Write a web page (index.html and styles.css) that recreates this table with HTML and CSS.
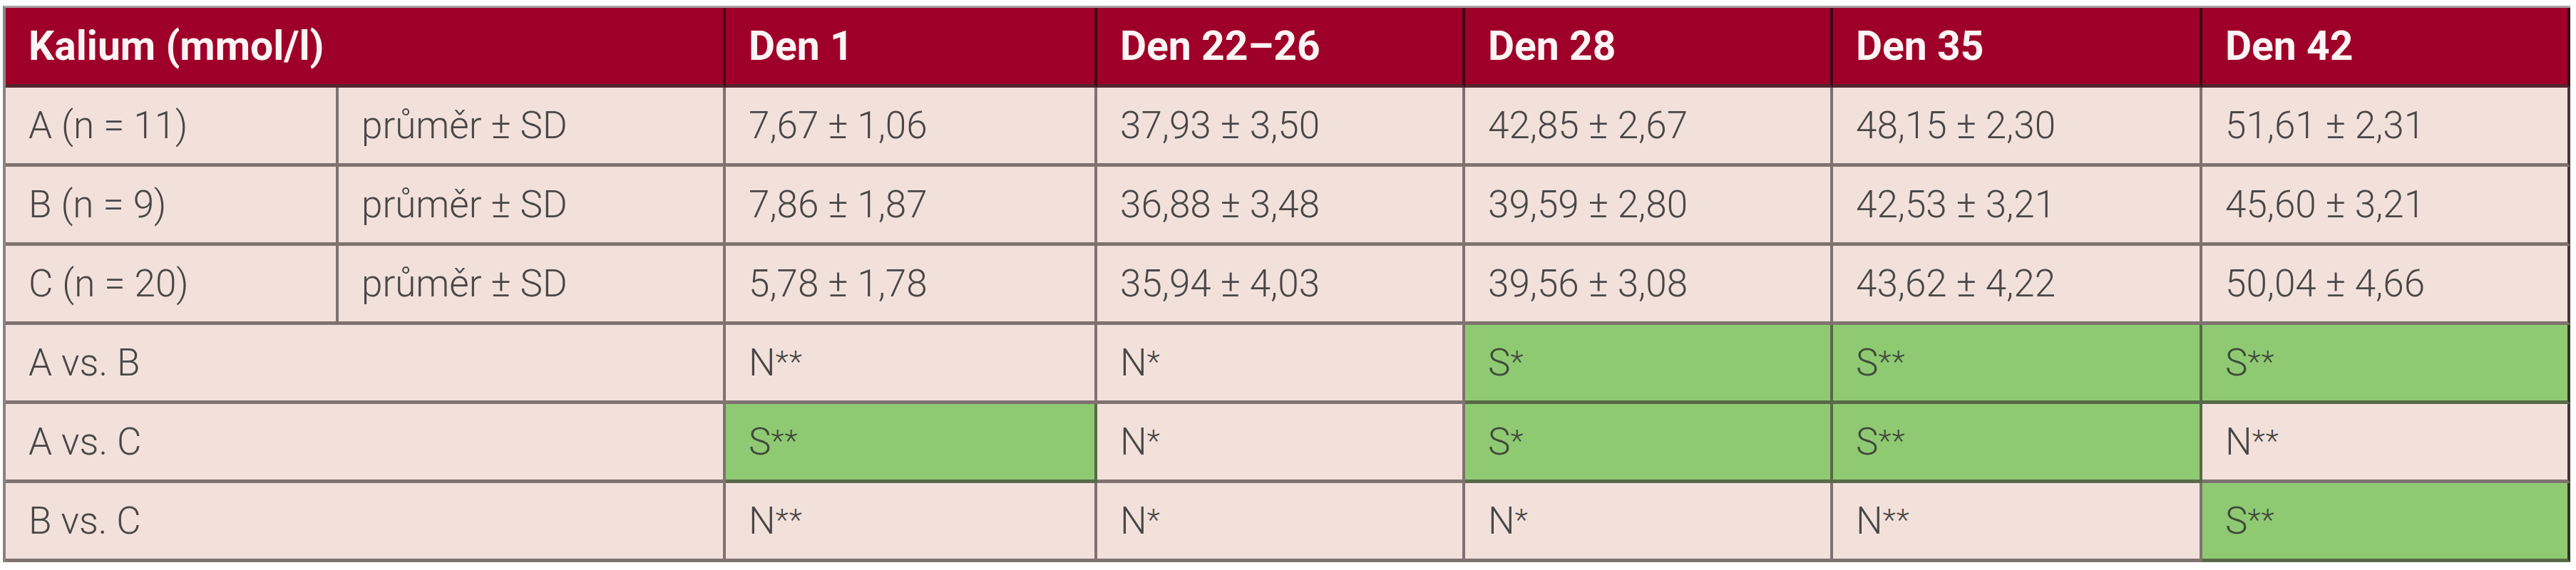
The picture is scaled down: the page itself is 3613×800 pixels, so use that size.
FILE: index.html
```html
<!DOCTYPE html>
<html lang="cs">
<head>
<meta charset="utf-8">
<title>Kalium (mmol/l)</title>
<link rel="stylesheet" href="styles.css">
</head>
<body>
<table class="data">
  <colgroup>
    <col class="c-group">
    <col class="c-stat">
    <col class="c-d1">
    <col class="c-day">
    <col class="c-day">
    <col class="c-d35">
    <col class="c-day">
  </colgroup>
  <thead>
    <tr>
      <th colspan="2">Kalium (mmol/l)</th>
      <th>Den 1</th>
      <th>Den 22–26</th>
      <th>Den 28</th>
      <th>Den 35</th>
      <th>Den 42</th>
    </tr>
  </thead>
  <tbody>
    <tr>
      <td>A (n = 11)</td>
      <td>průměr ± SD</td>
      <td>7,67 ± 1,06</td>
      <td>37,93 ± 3,50</td>
      <td>42,85 ± 2,67</td>
      <td>48,15 ± 2,30</td>
      <td>51,61 ± 2,31</td>
    </tr>
    <tr>
      <td>B (n = 9)</td>
      <td>průměr ± SD</td>
      <td>7,86 ± 1,87</td>
      <td>36,88 ± 3,48</td>
      <td>39,59 ± 2,80</td>
      <td>42,53 ± 3,21</td>
      <td>45,60 ± 3,21</td>
    </tr>
    <tr>
      <td>C (n = 20)</td>
      <td>průměr ± SD</td>
      <td>5,78 ± 1,78</td>
      <td>35,94 ± 4,03</td>
      <td>39,56 ± 3,08</td>
      <td>43,62 ± 4,22</td>
      <td>50,04 ± 4,66</td>
    </tr>
    <tr>
      <td colspan="2">A vs. B</td>
      <td>N<span class="ast">**</span></td>
      <td>N<span class="ast">*</span></td>
      <td class="sig">S<span class="ast">*</span></td>
      <td class="sig">S<span class="ast">**</span></td>
      <td class="sig">S<span class="ast">**</span></td>
    </tr>
    <tr>
      <td colspan="2">A vs. C</td>
      <td class="sig">S<span class="ast">**</span></td>
      <td>N<span class="ast">*</span></td>
      <td class="sig">S<span class="ast">*</span></td>
      <td class="sig">S<span class="ast">**</span></td>
      <td>N<span class="ast">**</span></td>
    </tr>
    <tr>
      <td colspan="2">B vs. C</td>
      <td>N<span class="ast">**</span></td>
      <td>N<span class="ast">*</span></td>
      <td>N<span class="ast">*</span></td>
      <td>N<span class="ast">**</span></td>
      <td class="sig">S<span class="ast">**</span></td>
    </tr>
  </tbody>
</table>
</body>
</html>
```

FILE: styles.css
```css
html, body {
  margin: 0;
  padding: 0;
  background: #ffffff;
}

.data {
  margin: 8px 0 0 4px;
  border-collapse: separate;
  border-spacing: 0;
  table-layout: fixed;
  width: 3601px;
  border-top: 3px solid rgba(60, 50, 50, 0.45);
  border-left: 4px solid rgba(60, 50, 50, 0.6);
  font-family: Roboto, "Liberation Sans", sans-serif;
}

.c-group { width: 467px; }
.c-stat { width: 543px; }
.c-d1 { width: 521px; }
.c-day { width: 516px; }
.c-d35 { width: 518px; }

.data th,
.data td {
  padding: 0 0 0 32px;
  text-align: left;
  vertical-align: middle;
  white-space: nowrap;
  border-right: 4px solid rgba(50, 40, 40, 0.6);
  border-bottom: 5px solid rgba(50, 40, 40, 0.6);
}

.data th {
  height: 107px;
  background: #9e0029;
  color: #fdf4f4;
  font-weight: 700;
  font-size: 57px;
  letter-spacing: 0;
  border-right-color: rgba(30, 10, 15, 0.75);
  border-bottom-color: rgba(60, 50, 50, 0.75);
}

.data td {
  height: 106px;
  background: #f2e1db;
  color: #4a4646;
  font-weight: 300;
  font-size: 53px;
  letter-spacing: 0;
}

.data td.sig {
  background: #8fca73;
  color: #3f4a3a;
}

.ast {
  font-size: 0.8em;
  vertical-align: 0.12em;
  letter-spacing: 1px;
}

.data tr td:last-child,
.data tr th:last-child {
  border-right-color: rgba(20, 15, 15, 0.8);
}
```
